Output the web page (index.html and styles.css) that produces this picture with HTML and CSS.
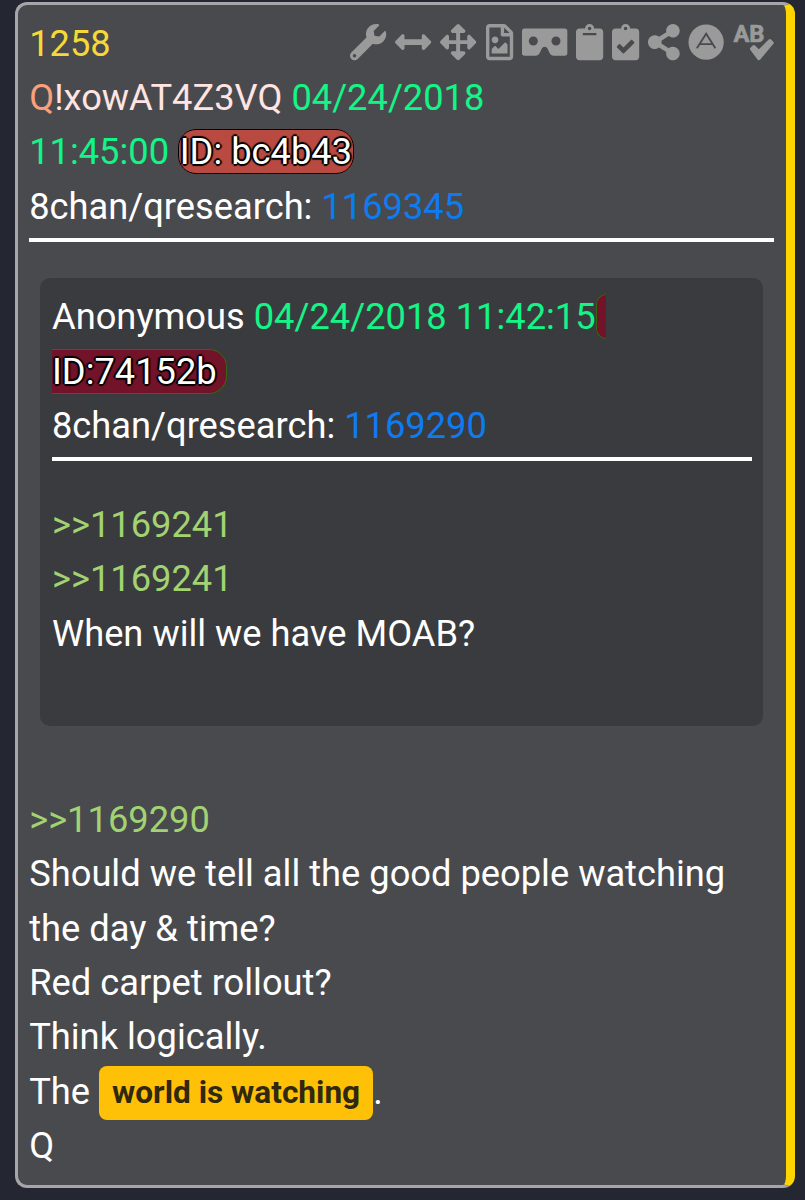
FILE: index.html
```html
<!DOCTYPE html>
<html lang="en">
<head>
    <meta charset="UTF-8">
    <meta name="viewport" content="width=device-width, initial-scale=1.0">
    <title>1258</title>
    <link rel="stylesheet" href="styles.css">
</head>
<body>
    <div class="post">
        <div class="toolbar">
            <span class="number">1258</span>
            <div class="icons">
                <svg viewBox="0 0 512 512"><path d="M507.73 109.1c-2.24-9.03-13.54-12.09-20.12-5.51l-74.36 74.36-67.88-11.31-11.31-67.88 74.36-74.36c6.62-6.62 3.43-17.9-5.66-20.16-47.38-11.74-99.55.91-136.58 37.93-39.64 39.64-50.55 97.1-34.05 147.2L18.74 402.76c-24.99 24.99-24.99 65.51 0 90.5 24.99 24.99 65.51 24.99 90.5 0l213.21-213.21c50.12 16.71 107.47 5.68 147.37-34.22 37.07-37.07 49.7-89.32 37.91-136.73zM64 472c-13.25 0-24-10.75-24-24 0-13.26 10.75-24 24-24s24 10.74 24 24c0 13.25-10.75 24-24 24z"/></svg>
                <svg viewBox="0 0 512 512"><path d="M377.941 169.941V216H134.059v-46.059c0-21.382-25.851-32.09-40.971-16.971L7.029 239.029c-9.373 9.373-9.373 24.568 0 33.941l86.059 86.059c15.119 15.119 40.971 4.411 40.971-16.971V296h243.882v46.059c0 21.382 25.851 32.09 40.971 16.971l86.059-86.059c9.373-9.373 9.373-24.568 0-33.941l-86.059-86.059c-15.119-15.12-40.971-4.412-40.971 16.97z"/></svg>
                <svg viewBox="0 0 512 512"><path d="M352.201 425.775l-79.196 79.196c-9.373 9.373-24.568 9.373-33.941 0l-79.196-79.196c-15.119-15.119-4.411-40.971 16.971-40.97h51.162L228 284H127.196v51.162c0 21.382-25.851 32.09-40.971 16.971L7.029 272.937c-9.373-9.373-9.373-24.569 0-33.941L86.225 159.8c15.119-15.119 40.971-4.411 40.971 16.971V228H228V127.196h-51.23c-21.382 0-32.09-25.851-16.971-40.971l79.196-79.196c9.373-9.373 24.568-9.373 33.941 0l79.196 79.196c15.119 15.119 4.411 40.971-16.971 40.971h-51.162V228h100.804v-51.162c0-21.382 25.851-32.09 40.97-16.971l79.196 79.196c9.373 9.373 9.373 24.569 0 33.941L425.773 352.2c-15.119 15.119-40.971 4.411-40.97-16.971V284H284v100.804h51.23c21.382 0 32.09 25.851 16.971 40.971z"/></svg>
                <svg viewBox="0 0 384 512"><path d="M369.9 97.9L286 14C277 5 264.8-.1 252.1-.1H48C21.5 0 0 21.5 0 48v416c0 26.5 21.5 48 48 48h288c26.5 0 48-21.5 48-48V131.9c0-12.7-5.1-25-14.1-34zM332.1 128H256V51.9l76.1 76.1zM48 464V48h160v104c0 13.3 10.7 24 24 24h104v288H48zm32-48h224V288l-23.5-23.5c-4.7-4.7-12.3-4.7-17 0L176 352l-39.5-39.5c-4.7-4.7-12.3-4.7-17 0L80 352v64zm48-240c-26.5 0-48 21.5-48 48s21.5 48 48 48 48-21.5 48-48-21.5-48-48-48z"/></svg>
                <svg viewBox="0 0 640 512"><path d="M608 64H32C14.33 64 0 78.33 0 96v320c0 17.67 14.33 32 32 32h160.22c25.19 0 48.03-14.77 58.36-37.74l27.74-61.64C286.21 331.08 302.35 320 320 320s33.79 11.08 41.68 28.62l27.74 61.64C399.75 433.23 422.6 448 447.78 448H608c17.67 0 32-14.33 32-32V96c0-17.67-14.33-32-32-32zM160 304c-35.35 0-64-28.65-64-64s28.65-64 64-64 64 28.65 64 64-28.65 64-64 64zm320 0c-35.35 0-64-28.65-64-64s28.65-64 64-64 64 28.65 64 64-28.65 64-64 64z"/></svg>
                <svg viewBox="0 0 384 512"><path d="M384 112v352c0 26.51-21.49 48-48 48H48c-26.51 0-48-21.49-48-48V112c0-26.51 21.49-48 48-48h80c0-35.29 28.71-64 64-64s64 28.71 64 64h80c26.51 0 48 21.49 48 48zM192 40c-13.255 0-24 10.745-24 24s10.745 24 24 24 24-10.745 24-24-10.745-24-24-24m96 114v-20a6 6 0 0 0-6-6H102a6 6 0 0 0-6 6v20a6 6 0 0 0 6 6h180a6 6 0 0 0 6-6z"/></svg>
                <svg viewBox="0 0 384 512"><path d="M336 64h-80c0-35.3-28.7-64-64-64s-64 28.7-64 64H48C21.5 64 0 85.5 0 112v352c0 26.5 21.5 48 48 48h288c26.5 0 48-21.5 48-48V112c0-26.5-21.5-48-48-48zM192 40c13.3 0 24 10.7 24 24s-10.7 24-24 24-24-10.7-24-24 10.7-24 24-24zm121.2 231.8l-143 141.8c-4.7 4.7-12.3 4.6-17-.1l-82.6-83.3c-4.7-4.7-4.6-12.3.1-17L99.1 285c4.7-4.7 12.3-4.6 17 .1l46 46.4 106-105.2c4.7-4.7 12.3-4.6 17 .1l28.2 28.4c4.7 4.8 4.6 12.3-.1 17z"/></svg>
                <svg viewBox="0 0 448 512"><path d="M352 320c-22.608 0-43.387 7.819-59.79 20.895l-102.486-64.054a96.551 96.551 0 0 0 0-41.683l102.486-64.054C308.613 184.181 329.392 192 352 192c53.019 0 96-42.981 96-96S405.019 0 352 0s-96 42.981-96 96c0 7.158.79 14.13 2.276 20.841L155.79 180.895C139.387 167.819 118.608 160 96 160c-53.019 0-96 42.981-96 96s42.981 96 96 96c22.608 0 43.387-7.819 59.79-20.895l102.486 64.054A96.301 96.301 0 0 0 256 416c0 53.019 42.981 96 96 96s96-42.981 96-96-42.981-96-96-96z"/></svg>
                <svg viewBox="0 0 36 36"><circle cx="18" cy="18" r="17.5"/><path class="line" d="M8.8 24L18 9.6 27.2 24M11.8 20H24.2"/></svg>
                <svg viewBox="0 0 576 512"><text x="6" y="252">AB</text><path d="M568 250l-30-31c-9-10-24-10-34 0L365 358l-54-55c-10-10-25-10-34 0l-31 31c-10 10-10 25 0 34l102 137c9 9 24 9 34 0l186-221c10-9 10-25 0-34z"/></svg>
            </div>
        </div>
        <div class="meta">
            <span class="name">Q</span><span class="trip">!xowAT4Z3VQ</span> <span class="date">04/24/2018<br>11:45:00</span> <span class="id">ID: bc4b43</span><br>
            8chan/qresearch: <a href="#">1169345</a>
        </div>
        <div class="quote">
            <div class="meta">
                Anonymous <span class="date">04/24/2018 11:42:15</span><span class="id anon">&nbsp;<br>ID:74152b&nbsp;</span><br>
                8chan/qresearch: <a href="#">1169290</a>
            </div>
            <div class="text">
                <span class="ref">&gt;&gt;1169241</span><br>
                <span class="ref">&gt;&gt;1169241</span><br>
                When will we have MOAB?
            </div>
        </div>
        <div class="text">
            <span class="ref">&gt;&gt;1169290</span><br>
            Should we tell all the good people watching<br>
            the day &amp; time?<br>
            Red carpet rollout?<br>
            Think logically.<br>
            The <span class="badge">world is watching</span>.<br>
            Q
        </div>
    </div>
</body>
</html>
```
FILE: styles.css
```css
* {
    box-sizing: border-box;
}

body {
    margin: 0;
    padding: 2px 10px 0 15px;
    height: 1200px;
    overflow: hidden;
    background: #242731;
    color: #fff;
    font-family: Roboto, sans-serif;
    font-size: 36.27px;
    line-height: 54.4px;
}

.post {
    height: 1186px;
    padding: 11.6px 12px 0 11.2px;
    background: #494a4e;
    border: 3px solid #a6a6aa;
    border-right: 9px solid #ffd500;
    border-radius: 12px;
    white-space: nowrap;
}

.toolbar {
    display: flex;
    justify-content: space-between;
}

.number {
    color: #f5d936;
}

.icons {
    display: flex;
    gap: 8.8px;
    padding-top: 7.4px;
}

.icons svg {
    display: block;
    height: 36.27px;
    fill: #9a9a9a;
    overflow: visible;
}

.icons .line {
    fill: none;
    stroke: #494a4e;
    stroke-width: 1.8;
}

.icons text {
    font-size: 335px;
    font-weight: bold;
    stroke: #9a9a9a;
    stroke-width: 10;
    stroke-linejoin: round;
}

.meta {
    padding-bottom: 3.6px;
    border-bottom: 4px solid #fff;
}

.name {
    color: #f9a07c;
}

.trip {
    color: #ffe4e1;
}

.date {
    color: #14f587;
}

a {
    color: #0f7bf0;
    text-decoration: none;
}

.id {
    padding: 0 0.7px;
    background: #b94a41;
    border: 1px solid #000;
    border-radius: 18px;
    text-shadow: -2px 0 1px #000, 2px 0 1px #000, 0 -2px 1px #000, 0 2px 1px #000, 1px 1px 1px #000, -1px -1px 1px #000;
}

.anon {
    padding: 0;
    background: #72132a;
    border-color: #2f6a12;
}

.quote {
    height: 448px;
    margin: 36px 11px 67px 10.8px;
    padding: 12.3px 11px 0 12px;
    background: #3a3b3e;
    border-radius: 10px;
}

.quote .text {
    padding-top: 37px;
}

.ref {
    color: #a3d273;
}

.badge {
    display: inline-block;
    padding: 0 13px;
    background: #ffc107;
    border-radius: 8px;
    color: #30280f;
    font-size: 31.6px;
    font-weight: bold;
    line-height: 54px;
    vertical-align: top;
    transform: translateY(1px);
}
```
